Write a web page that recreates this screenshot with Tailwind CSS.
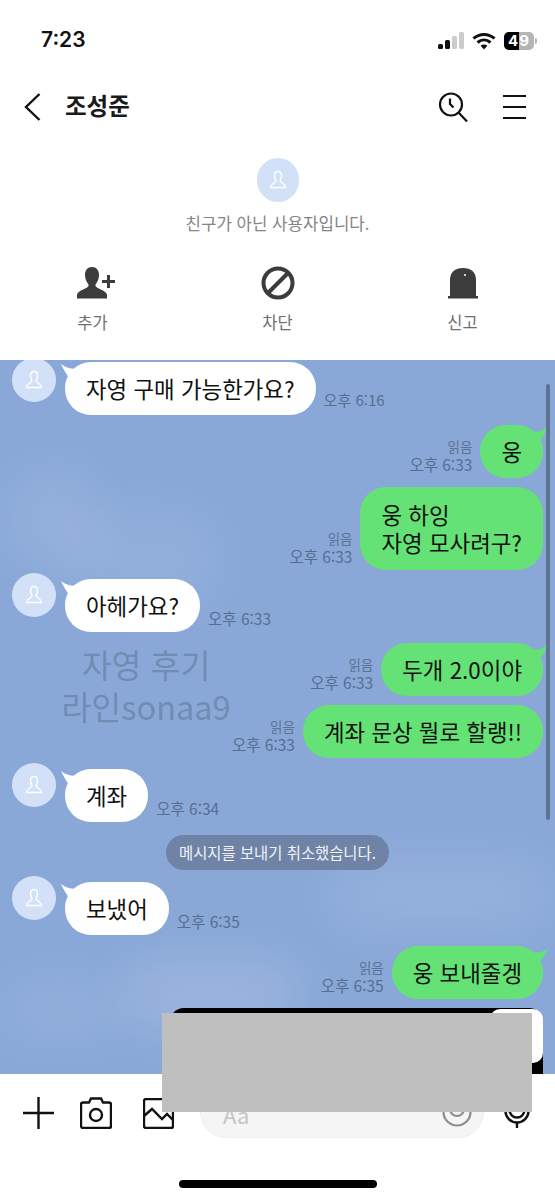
<!DOCTYPE html>
<html lang="ko">
  <head>
    <meta charset="UTF-8" />
    <meta name="viewport" content="width=device-width, initial-scale=1.0" />
    <title>조성준</title>
    <script src="https://cdn.jsdelivr.net/npm/@tailwindcss/browser@4"></script>
  </head>
  <body class="bg-white font-['Noto_Sans_CJK_KR','Noto_Sans',sans-serif]">
    <div class="flex flex-col w-[555px] h-[1200px] overflow-hidden relative">
      <!-- status bar -->
      <div class="flex items-center justify-between h-[80px] pl-[41px] pr-[18px] shrink-0">
        <span class="font-['Inter'] font-semibold text-[21px] text-[#111]">7:23</span>
        <div class="flex items-center gap-[8px] pt-[2px]">
          <svg width="26" height="18" viewBox="0 0 26 18">
            <rect x="0" y="12" width="5" height="5" rx="1.5" fill="#111" />
            <rect x="7" y="8" width="5" height="9" rx="1.5" fill="#111" />
            <rect x="14" y="4" width="5" height="13" rx="1.5" fill="#ccc" />
            <rect x="21" y="0" width="5" height="17" rx="1.5" fill="#ccc" />
          </svg>
          <svg width="24" height="18" viewBox="0 0 24 18" fill="none" stroke="#111" stroke-width="3">
            <path d="M1.5 6.5C7.5 1 16.5 1 22.5 6.5" />
            <path d="M5.5 10.5C9.5 7 14.5 7 18.5 10.5" />
            <path d="M12 17.5L8.6 13.8C10.5 12.2 13.5 12.2 15.4 13.8Z" fill="#111" stroke="none" />
          </svg>
          <div class="flex items-center gap-[1px]">
            <div class="flex w-[30px] h-[18px] rounded-[5px] overflow-hidden bg-[#b5b5b5] relative">
              <div class="w-[15px] bg-black"></div>
              <span class="absolute inset-0 flex items-center justify-center font-['Inter'] font-bold text-[15px] tracking-[1px] text-white">49</span>
            </div>
            <div class="w-[2px] h-[6px] rounded-r bg-[#b5b5b5]"></div>
          </div>
        </div>
      </div>

      <!-- header -->
      <div class="flex items-center h-[54px] pl-[24px] pr-[29px] shrink-0">
        <svg width="17" height="28" viewBox="0 0 17 28" fill="none" stroke="#111" stroke-width="2.4">
          <path d="M15.5 1L2 14L15.5 27" />
        </svg>
        <span class="ml-[24px] -mt-[2px] font-bold text-[23.5px] text-[#1a1a1a]">조성준</span>
        <div class="ml-auto flex items-center gap-[35px]">
          <svg width="30" height="30" viewBox="0 0 30 30" fill="none" stroke="#111" stroke-width="2.2">
            <circle cx="13" cy="12.5" r="11" />
            <path d="M20.5 20.5L29 29.5" />
            <path d="M12 6.5L12 12L15.5 15.5" />
          </svg>
          <div class="flex flex-col gap-[9px] w-[23px]">
            <div class="h-[2px] bg-[#111]"></div>
            <div class="h-[2px] bg-[#111]"></div>
            <div class="h-[2px] bg-[#111]"></div>
          </div>
        </div>
      </div>

      <!-- not a friend -->
      <div class="flex flex-col items-center shrink-0 h-[226px]">
        <div class="mt-[24px] w-[42px] h-[44px] rounded-full bg-[#d3e1f8] flex items-center justify-center">
          <svg width="20" height="20" viewBox="0 0 20 20" fill="none" stroke="#fff" stroke-width="1.4">
            <path d="M10 1.5C7.5 1.5 6.5 3.5 6.5 5.5C6.5 8 7.5 9.5 8 11C7 13 2.5 14 2.5 17.5L17.500 17.500C17.500 14 13 13 12 11C12.500 9.500 13.500 8 13.500 5.500C13.500 3.500 12.500 1.500 10 1.500Z" />
          </svg>
        </div>
        <p class="mt-[10px] text-[16.8px] leading-[22px] text-[#858585]">친구가 아닌 사용자입니다.</p>
        <div class="mt-[31px] w-full grid grid-cols-3">
          <div class="flex flex-col items-center gap-[10px]">
            <svg class="ml-[7px]" width="40" height="36" viewBox="0 -2 40 36">
              <path fill="#3c3c3c" d="M16 0C11.500 0 9 3.500 9 8C9 12 10.500 15 12.500 17.500V19C11 22 2.500 23 1 27.500V31.500H31V27.500C29.500 23 21 22 19.500 19V17.500C21.500 15 23 12 23 8C23 3.500 20.500 0 16 0Z" />
              <path d="M26 14.500H39M32.500 8V21" stroke="#3c3c3c" stroke-width="3" fill="none" />
            </svg>
            <span class="text-[16.5px] leading-[22px] text-[#6f6f6f]">추가</span>
          </div>
          <div class="flex flex-col items-center gap-[10px]">
            <svg width="36" height="36" viewBox="0 0 36 36" fill="none" stroke="#3c3c3c" stroke-width="4">
              <circle cx="18" cy="18" r="14.500" />
              <path d="M8 28L28 8" />
            </svg>
            <span class="text-[16.5px] leading-[22px] text-[#6f6f6f]">차단</span>
          </div>
          <div class="flex flex-col items-center gap-[10px]">
            <svg width="32" height="36" viewBox="0 0 32 36" fill="#3c3c3c">
              <path d="M3 31V15C3 7 8 3 16 3C24 3 29 7 29 15V31Z" />
              <rect x="1" y="31" width="30" height="2.500" />
              <circle cx="18" cy="10" r="1" fill="#fff" />
            </svg>
            <span class="text-[16.5px] leading-[22px] text-[#6f6f6f]">신고</span>
          </div>
        </div>
      </div>

      <!-- chat -->
      <div class="relative flex-1 overflow-hidden bg-[#89a8d8]">
        <!-- clouds -->
        <div class="absolute left-[10px] top-[110px] w-[90px] h-[100px] rounded-full bg-white/10 blur-xl"></div>
        <div class="absolute left-[70px] top-[150px] w-[150px] h-[100px] rounded-full bg-white/8 blur-xl"></div>
        <div class="absolute left-[330px] top-[500px] w-[220px] h-[70px] rounded-full bg-white/10 blur-xl"></div>
        <div class="absolute left-[120px] top-[600px] w-[180px] h-[70px] rounded-full bg-white/15 blur-xl"></div>
        <div class="absolute left-[0px] top-[620px] w-[120px] h-[60px] rounded-full bg-white/8 blur-xl"></div>

        <div class="relative flex flex-col pl-[12px] pr-[12px]">
          <!-- left row -->
          <div class="flex items-end -mt-[2px] h-[57px]">
            <div class="relative self-start w-[44px] h-[44px] rounded-full bg-[#d3e1f8] flex items-center justify-center shrink-0">
              <svg width="20" height="20" viewBox="0 0 20 20" fill="none" stroke="#fff" stroke-width="1.4">
                <path d="M10 1.500C7.500 1.500 6.500 3.500 6.500 5.500C6.500 8 7.500 9.500 8 11C7 13 2.500 14 2.500 17.500L17.500 17.500C17.500 14 13 13 12 11C12.500 9.500 13.500 8 13.500 5.500C13.500 3.500 12.500 1.500 10 1.500Z" />
              </svg>
            </div>
            <div class="relative ml-[9px] px-[21px] h-[53px] flex items-center rounded-[26px] bg-white text-[22.4px] text-[#111] whitespace-nowrap">
              <svg class="absolute -left-[4px] top-[2px]" width="18" height="14" viewBox="0 0 18 14"><path d="M0 0C5 4 10 5 18 5L8 14C5 9 2 5 0 0Z" fill="#fff" /></svg>
              자영 구매 가능한가요?
            </div>
            <span class="ml-[8px] mb-[6px] text-[15px] leading-[18px] text-[#566d90]">오후 6:16</span>
          </div>

          <!-- right row -->
          <div class="flex items-end justify-end mt-[10px]">
            <div class="mr-[8px] mb-[5px] flex flex-col items-end text-[15.5px] leading-[18px] text-[#566d90]">
              <span class="text-[13.5px] text-[#5d7294]">읽음</span>
              <span>오후 6:33</span>
            </div>
            <div class="relative px-[21px] h-[53px] flex items-center rounded-[26px] bg-[#65e275] text-[22.4px] text-[#111] whitespace-nowrap">
              <svg class="absolute -right-[5px] top-[2px]" width="18" height="14" viewBox="0 0 18 14"><path d="M18 0C13 4 8 5 0 5L10 14C13 9 16 5 18 0Z" fill="#65e275" /></svg>
              웅
            </div>
          </div>

          <div class="flex items-end justify-end mt-[9px]">
            <div class="mr-[8px] mb-[5px] flex flex-col items-end text-[15.5px] leading-[18px] text-[#566d90]">
              <span class="text-[13.5px] text-[#5d7294]">읽음</span>
              <span>오후 6:33</span>
            </div>
            <div class="px-[21px] h-[83px] flex items-center rounded-[26px] bg-[#65e275] text-[22.4px] leading-[28px] text-[#111] whitespace-nowrap">
              <p class="-mt-[2px]">웅 하잉<br />자영 모사려구?</p>
            </div>
          </div>

          <div class="flex items-end mt-[9px]">
            <div class="self-start -mt-[6px] w-[44px] h-[44px] rounded-full bg-[#d3e1f8] flex items-center justify-center shrink-0">
              <svg width="20" height="20" viewBox="0 0 20 20" fill="none" stroke="#fff" stroke-width="1.4">
                <path d="M10 1.500C7.500 1.500 6.500 3.500 6.500 5.500C6.500 8 7.500 9.500 8 11C7 13 2.500 14 2.500 17.500L17.500 17.500C17.500 14 13 13 12 11C12.500 9.500 13.500 8 13.500 5.500C13.500 3.500 12.500 1.500 10 1.500Z" />
              </svg>
            </div>
            <div class="relative ml-[9px] px-[21px] h-[53px] flex items-center rounded-[26px] bg-white text-[22.4px] text-[#111] whitespace-nowrap">
              <svg class="absolute -left-[4px] top-[2px]" width="18" height="14" viewBox="0 0 18 14"><path d="M0 0C5 4 10 5 18 5L8 14C5 9 2 5 0 0Z" fill="#fff" /></svg>
              아헤가요?
            </div>
            <span class="ml-[8px] mb-[5px] text-[15.5px] leading-[18px] text-[#566d90]">오후 6:33</span>
          </div>

          <div class="flex items-end justify-end mt-[11px]">
            <div class="mr-[8px] mb-[5px] flex flex-col items-end text-[15.5px] leading-[18px] text-[#566d90]">
              <span class="text-[13.5px] text-[#5d7294]">읽음</span>
              <span>오후 6:33</span>
            </div>
            <div class="relative px-[21px] h-[53px] flex items-center rounded-[26px] bg-[#65e275] text-[22.4px] text-[#111] whitespace-nowrap">
              <svg class="absolute -right-[5px] top-[2px]" width="18" height="14" viewBox="0 0 18 14"><path d="M18 0C13 4 8 5 0 5L10 14C13 9 16 5 18 0Z" fill="#65e275" /></svg>
              두개 2.0이야
            </div>
          </div>

          <div class="flex items-end justify-end mt-[9px]">
            <div class="mr-[8px] mb-[5px] flex flex-col items-end text-[15.5px] leading-[18px] text-[#566d90]">
              <span class="text-[13.5px] text-[#5d7294]">읽음</span>
              <span>오후 6:33</span>
            </div>
            <div class="px-[21px] h-[53px] flex items-center rounded-[26px] bg-[#65e275] text-[22.4px] text-[#111] whitespace-nowrap">
              계좌 문상 뭘로 할랭!!
            </div>
          </div>

          <div class="flex items-end mt-[11px]">
            <div class="self-start -mt-[6px] w-[44px] h-[44px] rounded-full bg-[#d3e1f8] flex items-center justify-center shrink-0">
              <svg width="20" height="20" viewBox="0 0 20 20" fill="none" stroke="#fff" stroke-width="1.4">
                <path d="M10 1.500C7.500 1.500 6.500 3.500 6.500 5.500C6.500 8 7.500 9.500 8 11C7 13 2.500 14 2.500 17.500L17.500 17.500C17.500 14 13 13 12 11C12.500 9.500 13.500 8 13.500 5.500C13.500 3.500 12.500 1.500 10 1.500Z" />
              </svg>
            </div>
            <div class="relative ml-[9px] px-[21px] h-[53px] flex items-center rounded-[26px] bg-white text-[22.4px] text-[#111] whitespace-nowrap">
              <svg class="absolute -left-[4px] top-[2px]" width="18" height="14" viewBox="0 0 18 14"><path d="M0 0C5 4 10 5 18 5L8 14C5 9 2 5 0 0Z" fill="#fff" /></svg>
              계좌
            </div>
            <span class="ml-[8px] mb-[5px] text-[15.5px] leading-[18px] text-[#566d90]">오후 6:34</span>
          </div>

          <div class="flex justify-center mt-[13px]">
            <span class="h-[35px] px-[13px] flex items-center rounded-full bg-[#6e83a5] text-[15.4px] text-white/90">메시지를 보내기 취소했습니다.</span>
          </div>

          <div class="flex items-end mt-[12px]">
            <div class="self-start -mt-[6px] w-[44px] h-[44px] rounded-full bg-[#d3e1f8] flex items-center justify-center shrink-0">
              <svg width="20" height="20" viewBox="0 0 20 20" fill="none" stroke="#fff" stroke-width="1.4">
                <path d="M10 1.500C7.500 1.500 6.500 3.500 6.500 5.500C6.500 8 7.500 9.500 8 11C7 13 2.500 14 2.500 17.500L17.500 17.500C17.500 14 13 13 12 11C12.500 9.500 13.500 8 13.500 5.500C13.500 3.500 12.500 1.500 10 1.500Z" />
              </svg>
            </div>
            <div class="relative ml-[9px] px-[21px] h-[53px] flex items-center rounded-[26px] bg-white text-[22.4px] text-[#111] whitespace-nowrap">
              <svg class="absolute -left-[4px] top-[2px]" width="18" height="14" viewBox="0 0 18 14"><path d="M0 0C5 4 10 5 18 5L8 14C5 9 2 5 0 0Z" fill="#fff" /></svg>
              보냈어
            </div>
            <span class="ml-[8px] mb-[5px] text-[15.5px] leading-[18px] text-[#566d90]">오후 6:35</span>
          </div>

          <div class="flex items-end justify-end mt-[11px]">
            <div class="mr-[8px] mb-[5px] flex flex-col items-end text-[15.5px] leading-[18px] text-[#566d90]">
              <span class="text-[13.5px] text-[#5d7294]">읽음</span>
              <span>오후 6:35</span>
            </div>
            <div class="relative px-[21px] h-[53px] flex items-center rounded-[26px] bg-[#65e275] text-[22.4px] text-[#111] whitespace-nowrap">
              <svg class="absolute -right-[5px] top-[2px]" width="18" height="14" viewBox="0 0 18 14"><path d="M18 0C13 4 8 5 0 5L10 14C13 9 16 5 18 0Z" fill="#65e275" /></svg>
              웅 보내줄겡
            </div>
          </div>

          <!-- black image message, cut off by the input bar -->
          <div class="self-end mt-[9px] w-[373px] h-[90px] rounded-t-[14px] bg-black flex justify-end">
            <div class="mt-[1px] w-[53px] h-[54px] rounded-[10px] bg-white"></div>
          </div>
        </div>

        <!-- watermark -->
        <div class="absolute left-[62px] top-[283px] w-[168px] flex flex-col items-center text-[32.5px] leading-[42px] text-[#6c83a8]/80 whitespace-nowrap">
          <span>자영 후기</span>
          <span>라인sonaa9</span>
        </div>

        <!-- scrollbar -->
        <div class="absolute left-[546px] top-[24px] w-[4px] h-[436px] rounded-full bg-[#5e7392]"></div>
      </div>

      <!-- input bar -->
      <div class="h-[126px] shrink-0 bg-white flex flex-col">
        <div class="flex items-start pl-[23px] mt-[12px]">
          <svg class="mt-[11px]" width="31" height="32" viewBox="0 0 31 32" fill="none" stroke="#111" stroke-width="2.400">
            <path d="M0 16H31M15.500 0V32" />
          </svg>
          <svg class="mt-[11px] ml-[26px]" width="32" height="32" viewBox="0 0 32 32" fill="none" stroke="#111" stroke-width="2.400">
            <path d="M3 5.500H9L11 1.500H21L23 5.500H29C30 5.500 31 6.500 31 7.500V29C31 30 30 31 29 31H3C2 31 1 30 1 29V7.500C1 6.500 2 5.500 3 5.500Z" />
            <circle cx="16" cy="18" r="6" />
          </svg>
          <svg class="mt-[12px] ml-[31px]" width="31" height="31" viewBox="0 0 31 31" fill="none" stroke="#111" stroke-width="2.400">
            <rect x="1" y="1" width="29" height="29" rx="2" />
            <path d="M1 18L9 11L19 21L24 16L30 22" />
          </svg>
          <div class="ml-[26px] flex items-center w-[284px] h-[52px] rounded-full bg-[#f5f5f5] border border-[#eeeeee] pl-[22px] pr-[11px]">
            <span class="mt-[4px] text-[22px] text-[#c4c4c4]">Aa</span>
            <svg class="ml-auto" width="30" height="30" viewBox="0 0 30 30" fill="none" stroke="#8d8d8d" stroke-width="2.200">
              <circle cx="15" cy="15" r="13.500" />
              <circle cx="15" cy="12" r="7" />
            </svg>
          </div>
          <svg class="ml-[20px] mt-[3px]" width="26" height="40" viewBox="0 0 26 40" fill="none" stroke="#111" stroke-width="2.400">
            <circle cx="13" cy="22" r="11.500" />
            <circle cx="13" cy="21" r="7.500" />
            <path d="M13 33.500V39" />
          </svg>
        </div>
        <div class="mt-auto mb-[12px] self-center w-[198px] h-[8px] rounded-full bg-black"></div>
      </div>

      <!-- redaction block laid over the screenshot -->
      <div class="absolute left-[162px] top-[1013px] w-[370px] h-[99px] bg-[#bfbfbf]"></div>
    </div>
  </body>
</html>
